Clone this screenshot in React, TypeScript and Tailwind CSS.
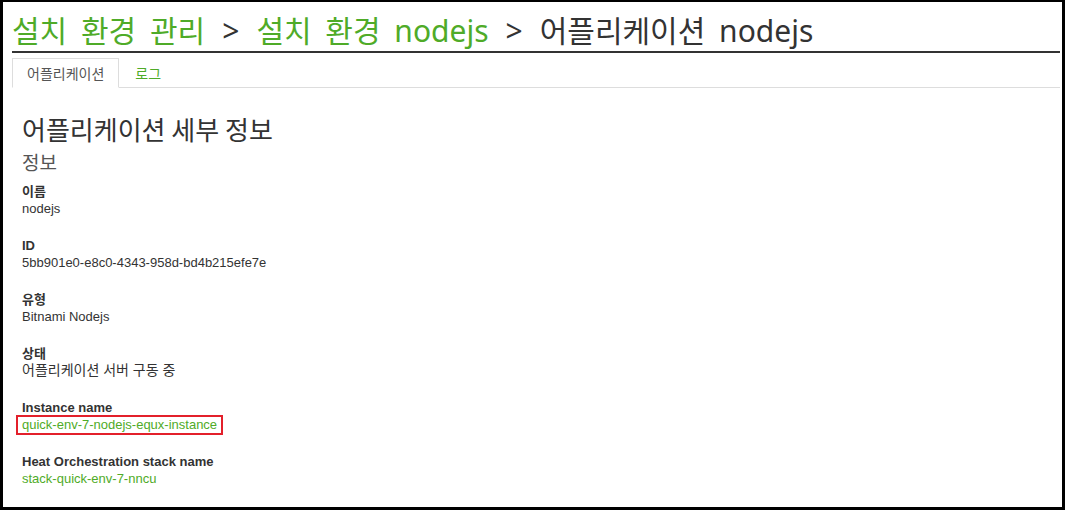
import React from 'react';

const GREEN = 'text-[#4fab28]';

type Field = { label: string; value: string; link?: boolean; marked?: boolean; korean?: boolean };

const fields: Field[] = [
  { label: '이름', value: 'nodejs' },
  { label: 'ID', value: '5bb901e0-e8c0-4343-958d-bd4b215efe7e' },
  { label: '유형', value: 'Bitnami Nodejs' },
  { label: '상태', value: '어플리케이션 서버 구동 중', korean: true },
  { label: 'Instance name', value: 'quick-env-7-nodejs-equx-instance', link: true, marked: true },
  { label: 'Heat Orchestration stack name', value: 'stack-quick-env-7-nncu', link: true },
];

export default function App() {
  return (
    <div className="w-[1065px] h-[510px] bg-black pt-[2px] pl-[3px] pr-[3px] pb-[3px]">
      <div className="w-full h-full bg-white pl-[9px] pr-[2px] text-[#333] font-['Liberation_Sans','Noto_Sans_CJK_KR',sans-serif] overflow-hidden">
        {/* breadcrumb title */}
        <h1 className="flex items-baseline gap-[17px] pt-[10px] pb-[1px] border-b-2 border-[#333] text-[30px] leading-[38px] font-normal font-['Noto_Sans','Noto_Sans_CJK_KR',sans-serif] [word-spacing:6px]">
          <span className={GREEN}>설치 환경 관리</span>
          <span>&gt;</span>
          <span className={GREEN}>설치 환경 nodejs</span>
          <span>&gt;</span>
          <span>어플리케이션 nodejs</span>
        </h1>

        {/* tabs */}
        <ul className="mt-[5px] flex border-b border-[#ddd] font-['Noto_Sans_CJK_KR',sans-serif] text-[14px]">
          <li className="-mb-px h-[30px] px-[14px] flex items-center border border-[#ddd] border-b-white bg-white text-[#555]">
            어플리케이션
          </li>
          <li className={`-mb-px h-[30px] px-[16px] flex items-center ${GREEN}`}>로그</li>
        </ul>

        {/* details */}
        <div className="pl-[10px]">
          <h2 className="mt-[26px] text-[26px] leading-[30px] font-normal font-['Noto_Sans_CJK_KR',sans-serif]">
            어플리케이션 세부 정보
          </h2>
          <h3 className="mt-[7px] text-[19px] leading-[22px] text-[#555] font-normal font-['Noto_Sans_CJK_KR',sans-serif]">
            정보
          </h3>
          <dl className="mt-[10px] flex flex-col gap-[20px] text-[13px] leading-[17px]">
            {fields.map((f) => (
              <div key={f.label}>
                <dt className="font-bold">{f.label}</dt>
                <dd className={`h-[17px] flex items-start ${f.link ? GREEN : ''} ${f.korean ? 'text-[14px]' : ''}`}>
                  {f.marked ? (
                    <span className="-ml-[6px] -mt-[1px] px-[4px] h-[20px] leading-[16px] border-2 border-[#e3202b]">
                      {f.value}
                    </span>
                  ) : (
                    f.value
                  )}
                </dd>
              </div>
            ))}
          </dl>
        </div>
      </div>
    </div>
  );
}
